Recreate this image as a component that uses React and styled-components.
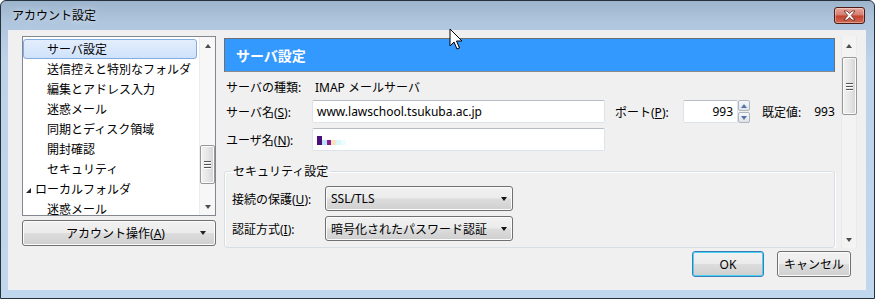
import React from "react";
import styled, { createGlobalStyle } from "styled-components";

const Global = createGlobalStyle`
  html, body { margin: 0; padding: 0; background: #fff; }
  body {
    font-family: "Noto Sans", "Noto Sans CJK JP", sans-serif;
    font-size: 12px;
    color: #000;
  }
  * { box-sizing: border-box; }
`;

// window chrome

const Window = styled.div`
  position: relative;
  width: 875px;
  height: 299px;
  border: 1px solid #26313d;
  border-radius: 6px 6px 0 0;
  background: linear-gradient(180deg, #9db4cd 0px, #aec5dd 20px, #bcd3ea 60px, #c0d7ee 100%);
  padding: 0 8px 8px 7px;
  display: flex;
  flex-direction: column;
  overflow: hidden;
`;

const TitleBar = styled.div`
  height: 29px;
  display: flex;
  align-items: center;
  justify-content: space-between;
  padding: 0 1px 2px 4px;
`;

const Title = styled.span`
  font-size: 12px;
  color: #000;
  text-shadow: 0 0 6px rgba(255, 255, 255, 0.8);
`;

const CloseButton = styled.div`
  width: 31px;
  height: 17px;
  margin-top: 2px;
  border: 1px solid #4e1a14;
  border-radius: 3px;
  background: linear-gradient(180deg, #e8a99e 0%, #d47a6c 48%, #c2412f 52%, #cf6a52 100%);
  box-shadow: inset 0 0 0 1px rgba(255, 255, 255, 0.35);
  display: flex;
  align-items: center;
  justify-content: center;
`;

const Client = styled.div`
  flex: 1;
  background: #f0f0f0;
  padding: 6px 0 0 14px;
  display: flex;
  flex-direction: column;
`;

const Main = styled.div`
  height: 212px;
  display: flex;
  gap: 6px;
`;

// left column: account tree

const LeftColumn = styled.div`
  width: 194px;
  display: flex;
  flex-direction: column;
  gap: 4px;
`;

const TreeList = styled.div`
  height: 180px;
  background: #fff;
  border: 1px solid #828790;
  display: flex;
  overflow: hidden;
`;

const TreeItems = styled.div`
  flex: 1;
  padding: 2px 0 0 0;
  display: flex;
  flex-direction: column;
`;

const TreeItem = styled.div`
  height: 20px;
  line-height: 18px;
  margin-right: 2px;
  padding-top: 1px;
  padding-left: ${(p) => (p.$top ? 2 : 23)}px;
  border: 1px solid ${(p) => (p.$selected ? "#84acdd" : "transparent")};
  border-radius: 3px;
  background: ${(p) =>
    p.$selected ? "linear-gradient(180deg, #e3eefd 0%, #cfe2fb 100%)" : "transparent"};
  display: flex;
  align-items: center;
  white-space: nowrap;
`;

const Expander = styled.span`
  width: 0;
  height: 0;
  border-left: 5px solid transparent;
  border-bottom: 5px solid #262626;
  margin: 2px 4px 0 0;
`;

const ListScroll = styled.div`
  width: 16px;
  background: #f7f7f7;
  border-left: 1px solid #ededed;
  display: flex;
  flex-direction: column;
  align-items: center;
`;

const ArrowBox = styled.div`
  height: ${(p) => p.$h || 17}px;
  width: 100%;
  display: flex;
  align-items: center;
  justify-content: center;
`;

const Tri = styled.span`
  width: 0;
  height: 0;
  border-left: 3.5px solid transparent;
  border-right: 3.5px solid transparent;
  ${(p) =>
    p.$down
      ? `border-top: 4px solid ${p.$c || "#4d4d4d"};`
      : `border-bottom: 4px solid ${p.$c || "#4d4d4d"};`}
`;

const Track = styled.div`
  flex: 1;
  width: 100%;
  display: flex;
  flex-direction: column;
  align-items: center;
`;

const Thumb = styled.div`
  width: 15px;
  height: ${(p) => p.$h}px;
  margin-top: ${(p) => p.$top}px;
  border: 1px solid #979797;
  border-radius: 2px;
  background: linear-gradient(90deg, #f2f2f2 0%, #e6e6e6 50%, #d4d4d4 100%);
  box-shadow: inset 0 0 0 1px #fbfbfb;
  display: flex;
  flex-direction: column;
  align-items: center;
  justify-content: center;
  gap: 2px;
`;

const Grip = styled.span`
  width: 7px;
  height: 1px;
  background: #555;
  box-shadow: 0 1px 0 #fff;
`;

const DropButton = styled.div`
  height: 26px;
  border: 1px solid #707070;
  border-radius: 3px;
  background: linear-gradient(180deg, #f2f2f2 0%, #ebebeb 49%, #dddddd 51%, #cfcfcf 100%);
  box-shadow: inset 0 0 0 1px #fcfcfc;
  display: flex;
  align-items: center;
  padding: 0 9px 0 0;
`;

const DropLabel = styled.span`
  flex: 1;
  text-align: center;
  padding-left: 8px;
`;

// right pane

const RightPane = styled.div`
  width: 635px;
  display: flex;
  gap: 4px;
`;

const Content = styled.div`
  width: 615px;
  padding-top: 2px;
  display: flex;
  flex-direction: column;
  overflow: hidden;
`;

const Header = styled.div`
  height: 34px;
  margin: 0 2px;
  background: #3399ff;
  border: 1px solid #6f6f6f;
  border-bottom-color: #8a8a8a;
  color: #fff;
  font-size: 14px;
  font-weight: bold;
  padding-left: 11px;
  display: flex;
  align-items: center;
`;

const Row = styled.div`
  display: flex;
  align-items: center;
  height: ${(p) => p.$h || 23}px;
  margin-top: ${(p) => p.$mt || 0}px;
  padding-left: ${(p) => (p.$inset ? 0 : 4)}px;
  white-space: nowrap;
`;

const Label = styled.span`
  width: ${(p) => p.$w}px;
  margin-left: ${(p) => p.$ml || 0}px;
  flex-shrink: 0;
`;

const Value = styled.span`
  padding-left: 3px;
  margin-left: ${(p) => p.$ml || 0}px;
`;

const TextInput = styled.div`
  width: ${(p) => p.$w}px;
  height: ${(p) => p.$h || 23}px;
  background: #fff;
  border: 1px solid #dde3ea;
  border-top-color: #b8bcc4;
  border-radius: 2px;
  padding: 0 4px;
  display: flex;
  align-items: center;
  justify-content: ${(p) => (p.$right ? "flex-end" : "flex-start")};
`;

const SpinBox = styled.div`
  display: flex;
  height: 23px;
`;

const SpinButtons = styled.div`
  width: 12px;
  display: flex;
  flex-direction: column;
  gap: 1px;
`;

const SpinButton = styled.div`
  flex: 1;
  border: 1px solid #b0b6c0;
  border-radius: 2px;
  background: linear-gradient(180deg, #f5f7fa 0%, #dfe4ea 100%);
  display: flex;
  align-items: center;
  justify-content: center;
`;

const Pixel = styled.span`
  display: inline-block;
  width: ${(p) => p.$w}px;
  height: ${(p) => p.$h}px;
  background: ${(p) => p.$c};
  align-self: flex-end;
  margin-bottom: 5px;
`;

const GroupBox = styled.fieldset`
  margin: 12px 2px 0 2px;
  padding: 6px 7px 6px 7px;
  border: 1px solid #d5dfe5;
  border-radius: 3px;
  box-shadow: inset 1px 1px 0 #fff, 1px 1px 0 #fff;
  display: flex;
  flex-direction: column;
  gap: 5px;
  min-width: 0;
`;

const Legend = styled.legend`
  padding: 1px 2px 0;
  margin-left: -1px;
  line-height: 16px;
`;

const Select = styled.div`
  width: 188px;
  height: 25px;
  border: 1px solid #707070;
  border-radius: 3px;
  background: linear-gradient(180deg, #f2f2f2 0%, #ebebeb 49%, #dddddd 51%, #cfcfcf 100%);
  box-shadow: inset 0 0 0 1px #fcfcfc;
  display: flex;
  align-items: center;
  justify-content: space-between;
  padding: 0 5px 0 5px;
`;

const Scroll = styled.div`
  width: 16px;
  background: #f3f3f3;
  border-left: 1px solid #e9e9e9;
  border-right: 1px solid #e9e9e9;
  display: flex;
  flex-direction: column;
  align-items: center;
`;

// footer buttons

const Footer = styled.div`
  display: flex;
  justify-content: flex-end;
  gap: 13px;
  margin-top: 3px;
  padding-right: 15px;
`;

const DialogButton = styled.div`
  width: ${(p) => p.$w}px;
  height: 26px;
  border: 1px solid ${(p) => (p.$default ? "#3c7fb1" : "#707070")};
  border-radius: 3px;
  background: linear-gradient(180deg, #f2f2f2 0%, #ebebeb 49%, #dddddd 51%, #cfcfcf 100%);
  box-shadow: inset 0 0 0 1px ${(p) => (p.$default ? "#48d2fb" : "#fcfcfc")};
  display: flex;
  align-items: center;
  justify-content: center;
`;

const Cursor = styled.svg`
  position: absolute;
  left: 448px;
  top: 27px;
`;

const tree = [
  { label: "サーバ設定", selected: true },
  { label: "送信控えと特別なフォルダ" },
  { label: "編集とアドレス入力" },
  { label: "迷惑メール" },
  { label: "同期とディスク領域" },
  { label: "開封確認" },
  { label: "セキュリティ" },
  { label: "ローカルフォルダ", top: true },
  { label: "迷惑メール" },
];

export default function App() {
  return (
    <>
      <Global />
      <Window>
        <TitleBar>
          <Title>アカウント設定</Title>
          <CloseButton>
            <svg width="13" height="11" viewBox="0 0 13 11">
              <path
                d="M1 1 L4 1 L6.5 3.6 L9 1 L12 1 L8.2 5.5 L12 10 L9 10 L6.5 7.4 L4 10 L1 10 L4.8 5.5 Z"
                fill="#fff"
                stroke="#5a2a24"
                strokeWidth="0.8"
              />
            </svg>
          </CloseButton>
        </TitleBar>

        <Client>
          <Main>
            <LeftColumn>
              <TreeList>
                <TreeItems>
                  {tree.map((t, i) => (
                    <TreeItem key={i} $selected={t.selected} $top={t.top}>
                      {t.top && <Expander />}
                      {t.label}
                    </TreeItem>
                  ))}
                </TreeItems>
                <ListScroll>
                  <ArrowBox>
                    <Tri />
                  </ArrowBox>
                  <Track>
                    <Thumb $top={91} $h={39}>
                      <Grip />
                      <Grip />
                      <Grip />
                    </Thumb>
                  </Track>
                  <ArrowBox>
                    <Tri $down />
                  </ArrowBox>
                </ListScroll>
              </TreeList>
              <DropButton>
                <DropLabel>
                  アカウント操作(<u>A</u>)
                </DropLabel>
                <Tri $down $c="#222" />
              </DropButton>
            </LeftColumn>

            <RightPane>
              <Content>
                <Header>サーバ設定</Header>

                <Row $h={20} $mt={5}>
                  <Label $w={86}>サーバの種類:</Label>
                  <Value>IMAP メールサーバ</Value>
                </Row>

                <Row $mt={3}>
                  <Label $w={86}>
                    サーバ名(<u>S</u>):
                  </Label>
                  <TextInput $w={293}>www.lawschool.tsukuba.ac.jp</TextInput>
                  <Label $w={68} $ml={10}>
                    ポート(<u>P</u>):
                  </Label>
                  <SpinBox>
                    <TextInput $w={55} $right>
                      993
                    </TextInput>
                    <SpinButtons>
                      <SpinButton>
                        <Tri $c="#5872a8" />
                      </SpinButton>
                      <SpinButton>
                        <Tri $down $c="#5872a8" />
                      </SpinButton>
                    </SpinButtons>
                  </SpinBox>
                  <Value $ml={9}>既定値:</Value>
                  <Value $ml={10}>993</Value>
                </Row>

                <Row $mt={5}>
                  <Label $w={86}>
                    ユーザ名(<u>N</u>):
                  </Label>
                  <TextInput $w={293}>
                    <Pixel $w={5} $h={9} $c="#4b0f7a" />
                    <Pixel $w={5} $h={5} $c="#b9e6f6" />
                    <Pixel $w={4} $h={5} $c="#8a1c8e" />
                    <Pixel $w={5} $h={5} $c="#f7e2c4" />
                    <Pixel $w={5} $h={5} $c="#d8f8fb" />
                    <Pixel $w={5} $h={5} $c="#eefcfd" />
                  </TextInput>
                </Row>

                <GroupBox>
                  <Legend>セキュリティ設定</Legend>
                  <Row $h={25} $inset>
                    <Label $w={93}>
                      接続の保護(<u>U</u>):
                    </Label>
                    <Select>
                      <span>SSL/TLS</span>
                      <Tri $down $c="#111" />
                    </Select>
                  </Row>
                  <Row $h={25} $inset>
                    <Label $w={93}>
                      認証方式(<u>I</u>):
                    </Label>
                    <Select>
                      <span>暗号化されたパスワード認証</span>
                      <Tri $down $c="#111" />
                    </Select>
                  </Row>
                </GroupBox>
              </Content>

              <Scroll>
                <ArrowBox $h={19}>
                  <Tri />
                </ArrowBox>
                <Track>
                  <Thumb $top={2} $h={58}>
                    <Grip />
                    <Grip />
                    <Grip />
                  </Thumb>
                </Track>
                <ArrowBox $h={16}>
                  <Tri $down />
                </ArrowBox>
              </Scroll>
            </RightPane>
          </Main>

          <Footer>
            <DialogButton $w={72} $default>
              OK
            </DialogButton>
            <DialogButton $w={74}>キャンセル</DialogButton>
          </Footer>
        </Client>

        <Cursor width="14" height="24" viewBox="0 0 14 24">
          <path
            d="M1 1 L1 18 L5 14 L8 21 L10.5 20 L7.5 13 L13 13 Z"
            fill="#fff"
            stroke="#000"
            strokeWidth="1"
            strokeLinejoin="miter"
          />
        </Cursor>
      </Window>
    </>
  );
}
